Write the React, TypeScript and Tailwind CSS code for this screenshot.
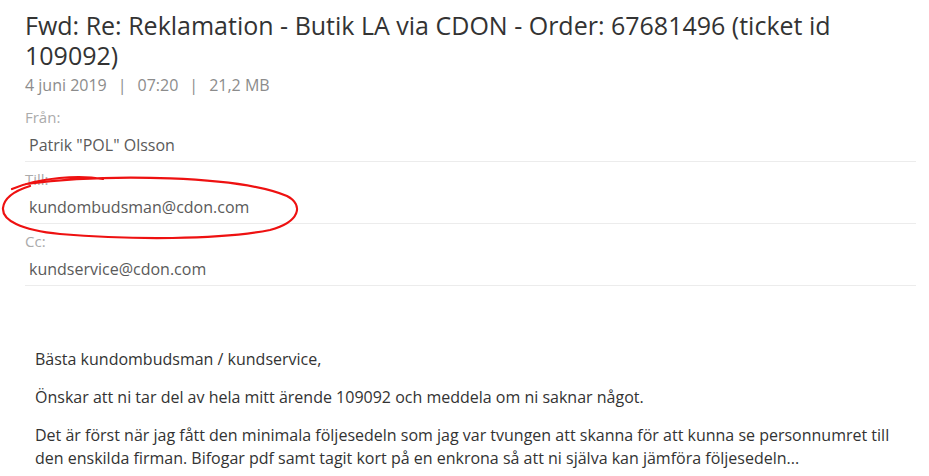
import React from "react";

const rows = [
  { label: "Från:", value: 'Patrik "POL" Olsson' },
  { label: "Till:", value: "kundombudsman@cdon.com" },
  { label: "Cc:", value: "kundservice@cdon.com" },
];

export default function App() {
  return (
    <div
      className="relative w-[929px] h-[476px] overflow-hidden bg-white"
      style={{ fontFamily: '"Open Sans", "Noto Sans", sans-serif' }}
    >
      <div className="pl-[25px] pr-[13px] pt-[10px]">
        <h1 className="text-[25px] leading-[30px] text-[#333333] font-normal">
          Fwd: Re: Reklamation - Butik LA via CDON - Order: 67681496 (ticket id 109092)
        </h1>
        <div className="mt-[5px] flex gap-[11px] text-[16px] leading-[20px] text-[#8c8c8c]">
          <span>4 juni 2019</span>
          <span>|</span>
          <span>07:20</span>
          <span>|</span>
          <span>21,2 MB</span>
        </div>
        <div className="mt-[5px] flex flex-col">
          {rows.map((r) => (
            <div key={r.label} className="pt-[7px] pb-[4px] border-b border-[#ececec]">
              <div className="text-[15px] leading-[20px] text-[#ababab]">{r.label}</div>
              <div className="mt-[6px] pl-[4px] text-[16px] leading-[24px] text-[#5a5a5a]">
                {r.value}
              </div>
            </div>
          ))}
        </div>
      </div>
      <div className="pl-[35px] w-[915px] mt-[62px] text-[16px] leading-[23px] text-[#333333] flex flex-col gap-[15px]">
        <p>Bästa kundombudsman / kundservice,</p>
        <p>Önskar att ni tar del av hela mitt ärende 109092 och meddela om ni saknar något.</p>
        <p>
          Det är först när jag fått den minimala följesedeln som jag var tvungen att skanna för att kunna se personnumret till
          den enskilda firman. Bifogar pdf samt tagit kort på en enkrona så att ni själva kan jämföra följesedeln...
        </p>
      </div>
      <svg
        className="absolute left-0 top-0 pointer-events-none"
        width="929"
        height="476"
        viewBox="0 0 929 476"
      >
        <path
          d="M103 179 C 80 175, 40 177, 12 189 M 26 184 C 110 173, 240 176, 287 196 C 304 205, 300 222, 270 230 C 220 240, 130 240, 60 234 C 20 230, 2 220, 3 208 C 4 198, 14 191, 30 186"
          fill="none"
          stroke="#ee1111"
          strokeWidth="2.2"
          strokeLinecap="round"
        />
      </svg>
    </div>
  );
}
